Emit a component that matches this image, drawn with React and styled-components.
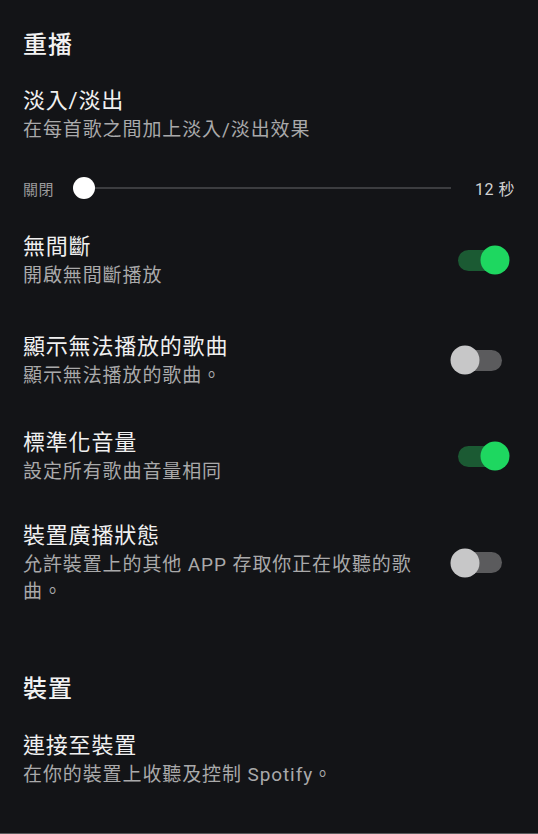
import React, { useState } from "react";
import styled, { createGlobalStyle } from "styled-components";

const GlobalStyle = createGlobalStyle`
  html, body {
    margin: 0;
    padding: 0;
    background: #131417;
  }
  body {
    font-family: Roboto, "Noto Sans CJK TC", "Noto Sans", sans-serif;
  }
`;

const Page = styled.div`
  box-sizing: border-box;
  width: 538px;
  min-height: 834px;
  padding: 29px 23px 0 23px;
  background: #131417;
  border-bottom: 1px solid #595a5c;
  color: #f1f1f1;
  display: flex;
  flex-direction: column;
`;

const SectionTitle = styled.h2`
  margin: ${(p) => p.$top || 0}px 0 0;
  font-size: 24px;
  line-height: 32px;
  font-weight: 500;
  letter-spacing: 1px;
  color: #f2f2f2;
`;

const Row = styled.div`
  display: flex;
  align-items: center;
  justify-content: space-between;
  gap: 24px;
  margin-top: ${(p) => p.$top}px;
`;

const Texts = styled.div`
  display: flex;
  flex-direction: column;
  max-width: 395px;
`;

const Title = styled.div`
  font-size: 22px;
  line-height: 31px;
  font-weight: 400;
  letter-spacing: 0.8px;
  color: #f0f0f0;
`;

const Sub = styled.div`
  font-size: 19px;
  line-height: 27px;
  letter-spacing: 0.9px;
  color: #a9a9aa;
`;

const SliderRow = styled.div`
  display: flex;
  align-items: center;
  height: 30px;
  margin-top: 30px;
`;

const SliderLabel = styled.span`
  font-size: ${(p) => (p.$bright ? 16 : 15)}px;
  color: ${(p) => (p.$bright ? "#d2d2d2" : "#9b9b9c")};
  letter-spacing: 0.5px;
  white-space: nowrap;
`;

const Track = styled.div`
  position: relative;
  flex: 1;
  height: 2px;
  margin: 0 24px 0 19px;
  background: #3c3d40;
`;

const Thumb = styled.div`
  position: absolute;
  top: 50%;
  width: 22px;
  height: 22px;
  border-radius: 50%;
  background: #ffffff;
  transform: translate(-50%, -50%);
`;

const SwitchTrack = styled.button`
  position: relative;
  flex: none;
  width: 44px;
  height: 21px;
  margin-right: 13px;
  padding: 0;
  border: none;
  border-radius: 11px;
  cursor: pointer;
  background: ${(p) => (p.$on ? "#1b5a33" : "#5b5b5d")};
`;

const SwitchKnob = styled.span`
  position: absolute;
  top: 50%;
  left: ${(p) => (p.$on ? "37px" : "7px")};
  width: 29px;
  height: 29px;
  border-radius: 50%;
  background: ${(p) => (p.$on ? "#1ed760" : "#c7c7c8")};
  transform: translate(-50%, -50%);
`;

function Switch({ on, onToggle }) {
  return (
    <SwitchTrack $on={on} onClick={onToggle} aria-pressed={on}>
      <SwitchKnob $on={on} />
    </SwitchTrack>
  );
}

const toggles = [
  { key: "gapless", title: "無間斷", sub: "開啟無間斷播放", on: true, top: 28 },
  { key: "unplayable", title: "顯示無法播放的歌曲", sub: "顯示無法播放的歌曲。", on: false, top: 42 },
  { key: "normalize", title: "標準化音量", sub: "設定所有歌曲音量相同", on: true, top: 38 },
  {
    key: "broadcast",
    title: "裝置廣播狀態",
    sub: "允許裝置上的其他 APP 存取你正在收聽的歌曲。",
    on: false,
    top: 35,
  },
];

export default function App() {
  const [state, setState] = useState(
    Object.fromEntries(toggles.map((t) => [t.key, t.on]))
  );
  const [fade] = useState(0);

  return (
    <>
      <GlobalStyle />
      <Page>
        <SectionTitle>重播</SectionTitle>

        <Row $top={24}>
          <Texts>
            <Title>淡入/淡出</Title>
            <Sub>在每首歌之間加上淡入/淡出效果</Sub>
          </Texts>
        </Row>

        <SliderRow>
          <SliderLabel>關閉</SliderLabel>
          <Track>
            <Thumb style={{ left: `calc(${(fade / 12) * 100}% + 11px)` }} />
          </Track>
          <SliderLabel $bright>12 秒</SliderLabel>
        </SliderRow>

        {toggles.map((t) => (
          <Row key={t.key} $top={t.top}>
            <Texts>
              <Title>{t.title}</Title>
              <Sub>{t.sub}</Sub>
            </Texts>
            <Switch
              on={state[t.key]}
              onToggle={() => setState((s) => ({ ...s, [t.key]: !s[t.key] }))}
            />
          </Row>
        ))}

        <SectionTitle $top={68}>裝置</SectionTitle>

        <Row $top={25}>
          <Texts>
            <Title>連接至裝置</Title>
            <Sub>在你的裝置上收聽及控制 Spotify。</Sub>
          </Texts>
        </Row>
      </Page>
    </>
  );
}
